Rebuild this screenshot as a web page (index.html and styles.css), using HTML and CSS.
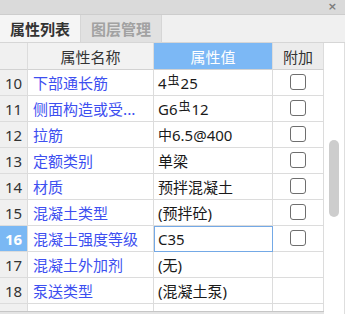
FILE: index.html
```html
<!DOCTYPE html>
<html lang="zh-CN">
<head>
<meta charset="utf-8">
<title>属性列表</title>
<link rel="stylesheet" href="styles.css">
</head>
<body>
<div class="titlebar"><span class="close">×</span></div>
<div class="tabs">
  <div class="tab active">属性列表</div>
  <div class="tab">图层管理</div>
</div>
<div class="body">
  <div class="grid">
    <div class="row head">
      <div class="c num"></div>
      <div class="c name">属性名称</div>
      <div class="c val">属性值</div>
      <div class="c add">附加</div>
    </div>
    <div class="row">
      <div class="c num">10</div>
      <div class="c name">下部通长筋</div>
      <div class="c val">4<span class="rb">虫</span>25</div>
      <div class="c add"><span class="cb"></span></div>
    </div>
    <div class="row">
      <div class="c num">11</div>
      <div class="c name">侧面构造或受...</div>
      <div class="c val">G6<span class="rb">虫</span>12</div>
      <div class="c add"><span class="cb"></span></div>
    </div>
    <div class="row">
      <div class="c num">12</div>
      <div class="c name">拉筋</div>
      <div class="c val"><span class="rp">中</span>6.5@400</div>
      <div class="c add"><span class="cb"></span></div>
    </div>
    <div class="row">
      <div class="c num">13</div>
      <div class="c name">定额类别</div>
      <div class="c val">单梁</div>
      <div class="c add"><span class="cb"></span></div>
    </div>
    <div class="row">
      <div class="c num">14</div>
      <div class="c name">材质</div>
      <div class="c val">预拌混凝土</div>
      <div class="c add"><span class="cb"></span></div>
    </div>
    <div class="row">
      <div class="c num">15</div>
      <div class="c name">混凝土类型</div>
      <div class="c val">(预拌砼)</div>
      <div class="c add"><span class="cb"></span></div>
    </div>
    <div class="row">
      <div class="c num sel">16</div>
      <div class="c name">混凝土强度等级</div>
      <div class="c val edit">C35</div>
      <div class="c add"><span class="cb"></span></div>
    </div>
    <div class="row">
      <div class="c num">17</div>
      <div class="c name">混凝土外加剂</div>
      <div class="c val">(无)</div>
      <div class="c add"></div>
    </div>
    <div class="row">
      <div class="c num">18</div>
      <div class="c name">泵送类型</div>
      <div class="c val">(混凝土泵)</div>
      <div class="c add"></div>
    </div>
    <div class="row">
      <div class="c num"></div>
      <div class="c name"></div>
      <div class="c val"></div>
      <div class="c add"></div>
    </div>
  </div>
  <div class="scroll"><div class="thumb"></div></div>
</div>
</body>
</html>
```
FILE: styles.css
```css
html, body {
  margin: 0;
  padding: 0;
}
body {
  width: 345px;
  height: 314px;
  overflow: hidden;
  background: #e4e4e4;
  font-family: "Noto Sans", "Noto Sans CJK SC", sans-serif;
  font-size: 15px;
  color: #1e1e1e;
}
.titlebar {
  height: 14px;
  background: #dadada;
  border-bottom: 1px solid #cdcdcd;
  display: flex;
  justify-content: flex-end;
  align-items: center;
}
.close {
  font-family: "DejaVu Sans", sans-serif;
  font-size: 11px;
  font-weight: bold;
  line-height: 12px;
  height: 12px;
  color: #7c7c7c;
  padding-right: 8px;
}
.tabs {
  height: 27px;
  background: #f0f0f0;
  border-bottom: 1px solid #d6d6d6;
  display: flex;
}
.tab {
  width: 80px;
  border-right: 1px solid #d6d6d6;
  background: #e1e1e1;
  color: #a2a2a2;
  font-weight: bold;
  display: flex;
  align-items: center;
  justify-content: center;
  font-family: "Noto Sans CJK SC", sans-serif;
}
.tab.active {
  background: #f5f5f5;
  color: #333333;
}
.body {
  display: flex;
  height: 271px;
}
.grid {
  width: 324px;
  height: 269px;
  box-sizing: border-box;
  overflow: hidden;
  background: #ffffff;
  border-bottom: 1px solid #c6c6c6;
}
.row {
  display: grid;
  grid-template-columns: 28px 126px 119px 51px;
  height: 26px;
}
.row.head {
  height: 27px;
}
.c {
  box-sizing: border-box;
  border-right: 1px solid #dcdcdc;
  border-bottom: 1px solid #dcdcdc;
  display: flex;
  align-items: center;
  white-space: nowrap;
  overflow: hidden;
}
.num {
  background: #f0f0f0;
  color: #333333;
  padding-left: 5px;
}
.num.sel {
  background: #7ab8f4;
  color: #ffffff;
  font-weight: bold;
}
.name {
  padding-left: 5px;
  color: #3d4ff0;
  font-family: "Noto Sans CJK SC", sans-serif;
}
.val {
  padding-left: 4px;
  color: #1a1a1a;
}
.val.edit {
  border: 1px solid #74a9e6;
  padding-left: 3px;
}
.add {
  justify-content: center;
}
.head .c {
  justify-content: center;
  padding-left: 0;
  font-family: "Noto Sans CJK SC", sans-serif;
  color: #333333;
  border-bottom-color: #d2d2d2;
}
.head .num {
  background: #f0f0f0;
}
.head .name {
  background: #f2f2f2;
}
.head .val {
  background: #7cb8f5;
  color: #ffffff;
}
.head .add {
  background: #ececec;
}
.rb {
  font-family: "Noto Sans CJK SC", sans-serif;
  font-size: 12px;
  position: relative;
  top: -3px;
  margin: 0 1px;
}
.rp {
  font-family: "Noto Sans CJK SC", sans-serif;
  font-size: 14px;
  position: relative;
  top: -1px;
}
.cb {
  width: 16px;
  height: 16px;
  box-sizing: border-box;
  border: 1px solid #6e6e6e;
  border-radius: 3px;
  background: #ffffff;
  margin-top: -1px;
}
.scroll {
  flex: 1;
  background: #ffffff;
  border-right: 1px solid #dedede;
}
.thumb {
  width: 10px;
  height: 77px;
  margin: 97px 0 0 5px;
  border-radius: 5px;
  background: #cdcdcd;
}
```
